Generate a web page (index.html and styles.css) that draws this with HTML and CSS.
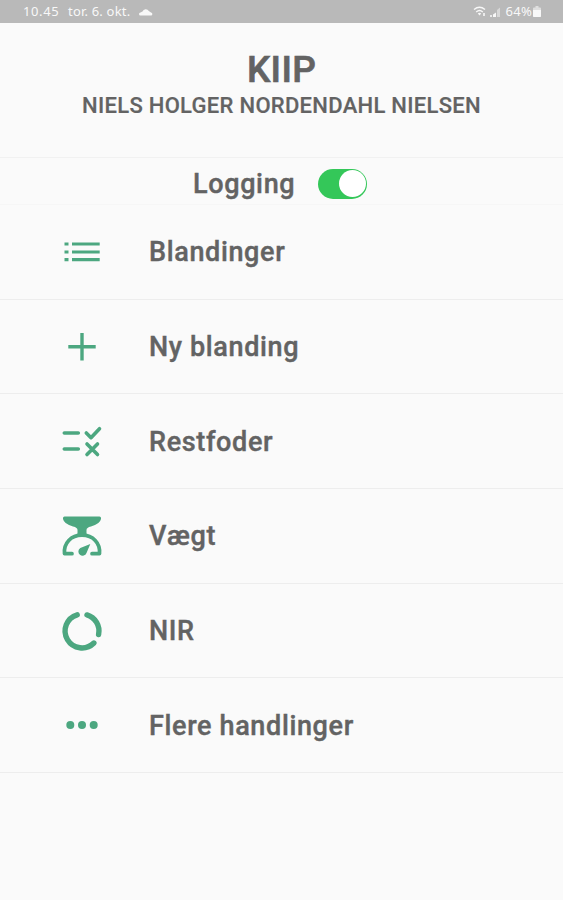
FILE: index.html
```html
<!DOCTYPE html>
<html lang="da">
<head>
<meta charset="utf-8">
<meta name="viewport" content="width=device-width, initial-scale=1">
<title>KIIP</title>
<link rel="stylesheet" href="styles.css">
</head>
<body>
<div class="statusbar">
  <span class="time">10.45</span>
  <span class="date">tor. 6. okt.</span>
  <svg class="cloud" width="14" height="8" viewBox="0 0 14 8"><path d="M1.500 7.500a1.500 1.500 0 0 1 0-3L3.500 3.500A3.500 3.500 0 0 1 9.800 3L12 4.500a1.600 1.600 0 0 1 .5 3z" fill="currentColor"/></svg>
  <span class="status-right">
    <svg width="29" height="14" viewBox="0 0 29 14"><g fill="none" stroke="currentColor" stroke-width="1.4"><path d="M1 4.5Q6.500 0 12 4.500M3.200 7Q6.500 4.200 9.800 7"/></g><path d="M4.800 8.500Q6.500 7.200 8.200 8.500L6.500 10.500z" fill="currentColor"/><path d="M10 8h2v3h-2zM17 10h2v2h-2z" fill="currentColor" opacity=".8"/><path d="M20 12V9.500l3-2V12z" fill="currentColor"/><path d="M24 12V5l3-2.500V12z" fill="currentColor" opacity=".5"/></svg>
    <span class="percent">64%</span>
    <svg width="8" height="11" viewBox="0 0 8 11"><path d="M2.500 0h3v1.500H7a1 1 0 0 1 1 1V10a1 1 0 0 1-1 1H1a1 1 0 0 1-1-1V2.500a1 1 0 0 1 1-1h1.500z" fill="currentColor" opacity=".6"/><path d="M0 4h8v6a1 1 0 0 1-1 1H1a1 1 0 0 1-1-1z" fill="currentColor"/></svg>
  </span>
</div>
<header class="header">
  <h1>KIIP</h1>
  <h2>NIELS HOLGER NORDENDAHL NIELSEN</h2>
</header>
<div class="logging">
  <span class="logging-label">Logging</span>
  <span class="switch" role="switch" aria-checked="true"><span class="knob"></span></span>
</div>
<nav class="menu">
  <a class="item">
    <svg class="icon" viewBox="-24 -24 48 48"><path d="M-17.500-8h4M-17.500 0h4M-17.500 7.700h4M-10-8h27.700M-10 0h27.700M-10 7.700h27.700" stroke-width="3.200"/></svg>
    <span class="label">Blandinger</span>
  </a>
  <a class="item">
    <svg class="icon" viewBox="-24 -24 48 48"><path d="M-13.700-.300h27.400M0-14v27.400" stroke-width="3.400"/></svg>
    <span class="label">Ny blanding</span>
  </a>
  <a class="item">
    <svg class="icon" viewBox="-24 -24 48 48"><path class="round" d="M-17.700-8H-3.700M-17.700 8H-3.700M4.300-8l4.700 4.700 8.500-9M5 3l10.500 10.500M15.500 3L5 13.500" stroke-width="3.600"/></svg>
    <span class="label">Restfoder</span>
  </a>
  <a class="item">
    <svg class="icon" viewBox="-24 -24 48 48"><path class="solid" d="M-17.500-19.500h35q1.500 0 1.500 1.500v1q-1 5-10 7.500Q4.500-8.500 4.500-6v5h-9v-5q0-2.500-4.500-3.500Q-18-12-19-17v-1q0-1.500 1.500-1.500z"/><path class="round" d="M-10 17.700h-7.500C-18.500 7-11-.800 0-.800S18.500 7 17.500 17.700H10" stroke-width="3.700"/><path class="solid" d="M8.300 8L4.500 17A4.200 4.200 0 1 1-1.700 12z"/></svg>
    <span class="label">Vægt</span>
  </a>
  <a class="item">
    <svg class="icon" viewBox="-24 -24 48 48"><path class="round" d="M-4.800-16.200A16.900 16.900 0 1 0 11.900 12M5-16.100A16.900 16.900 0 0 1 16.600 3.500" stroke-width="5.400"/></svg>
    <span class="label">NIR</span>
  </a>
  <a class="item">
    <svg class="icon" viewBox="-24 -24 48 48"><g class="solid"><circle cx="-11.700" cy="0" r="4"/><circle cx="0" cy="0" r="4"/><circle cx="11.700" cy="0" r="4"/></g></svg>
    <span class="label">Flere handlinger</span>
  </a>
</nav>
</body>
</html>
```
FILE: styles.css
```css
* { box-sizing: border-box; }

body {
  margin: 0;
  min-height: 900px;
  background: #fafafa;
  color: #636363;
  font-family: Roboto, "Liberation Sans", sans-serif;
}

.statusbar {
  display: flex;
  align-items: center;
  height: 23px;
  padding: 0 22px 0 23px;
  background: #b9b9b9;
  color: #f8f8f8;
  font-family: "Noto Sans", sans-serif;
  font-size: 13px;
  line-height: 23px;
}

.time { width: 45px; letter-spacing: 0.6px; }
.date { width: 71px; letter-spacing: 0.2px; }

.status-right {
  display: flex;
  align-items: center;
  margin-left: auto;
}

.percent { margin: 0 1px 0 3px; letter-spacing: 0.3px; }

.header {
  height: 135px;
  padding-top: 24px;
  border-bottom: 1px solid #f1f1f1;
  text-align: center;
}

h1, h2 { margin: 0; font-weight: 500; }

h1 {
  font-size: 37px;
  line-height: 46px;
  letter-spacing: 0.3px;
  -webkit-text-stroke: 0.7px;
}

h2 {
  font-size: 22px;
  line-height: 25px;
  letter-spacing: 0.29px;
  -webkit-text-stroke: 0.2px;
}

.logging {
  display: flex;
  align-items: center;
  height: 47px;
  padding: 5px 0 0 193px;
  border-bottom: 1px solid #f6f6f6;
}

.logging-label {
  width: 125px;
  font-size: 27px;
  font-weight: 500;
  letter-spacing: 0.65px;
  -webkit-text-stroke: 0.4px;
}

.switch {
  display: flex;
  justify-content: flex-end;
  width: 49px;
  height: 30px;
  padding: 1.5px;
  border-radius: 15px;
  background: #34c759;
}

.knob {
  width: 27px;
  height: 27px;
  border-radius: 50%;
  background: #fff;
}

.item {
  display: flex;
  align-items: center;
  height: 94.7px;
  padding-left: 58px;
  border-bottom: 1px solid #ededed;
}

.icon {
  width: 48px;
  height: 48px;
  margin-right: 43px;
  fill: none;
  stroke: #4ca780;
}

.solid { fill: #4ca780; stroke: none; }
.round { stroke-linecap: round; stroke-linejoin: round; }

.label {
  padding-top: 1px;
  font-size: 27px;
  font-weight: 500;
  line-height: 32px;
  letter-spacing: 0.64px;
  -webkit-text-stroke: 0.4px;
}
```
